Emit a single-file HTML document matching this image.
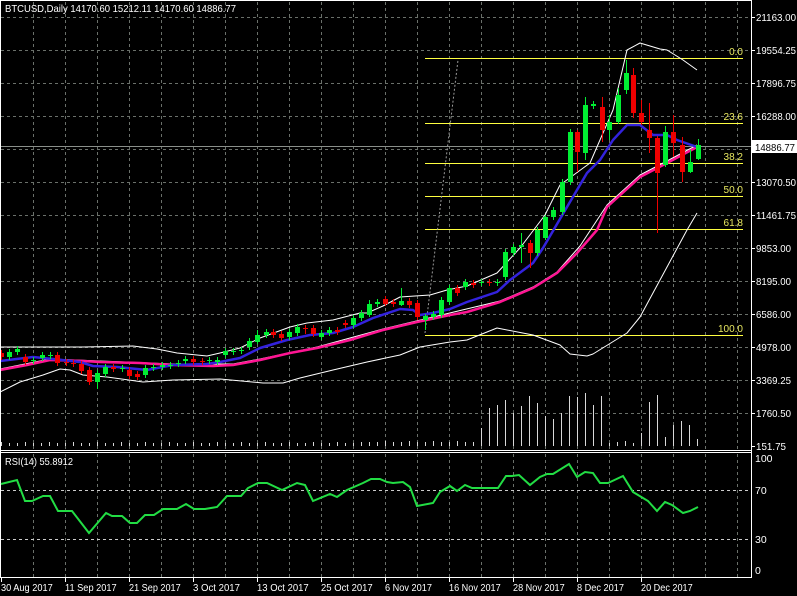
<!DOCTYPE html>
<html><head><meta charset="utf-8"><style>
html,body{margin:0;padding:0;background:#000;width:797px;height:596px;overflow:hidden}
svg{display:block}
text{font-family:"Liberation Sans",sans-serif;font-size:10.5px;fill:#fff}
</style></head><body>
<svg id="s" width="797" height="596" xmlns="http://www.w3.org/2000/svg">
<rect width="797" height="596" fill="#000"/>
<g id="grid" stroke="#6a706a" stroke-width="1" stroke-dasharray="3,3"></g>
<line x1="0" y1="146.5" x2="751" y2="146.5" stroke="#8a8f8a"/>
<g id="fib"></g>
<line x1="425" y1="333" x2="458" y2="60" stroke="#9a9a9a" stroke-dasharray="2,2"/>
<g id="vol" stroke="#d8d8d8"></g>
<g id="lines" fill="none"></g>
<g id="candles"></g>
<line x1="0" y1="450.5" x2="751" y2="450.5" stroke="#fff"/>
<line x1="0" y1="452.5" x2="751" y2="452.5" stroke="#fff"/>
<line x1="751.5" y1="0" x2="751.5" y2="578" stroke="#fff"/>
<line x1="0" y1="577.5" x2="751" y2="577.5" stroke="#fff"/>
<line x1="0" y1="0.5" x2="751" y2="0.5" stroke="#fff"/>
<line x1="0.5" y1="0" x2="0.5" y2="578" stroke="#fff"/>
<g id="rsi" fill="none"></g>
<g id="labels"></g>
<text x="5" y="12" textLength="231" lengthAdjust="spacingAndGlyphs">BTCUSD,Daily  14170.60 15212.11 14170.60 14886.77</text>
<text x="5" y="465" textLength="68" lengthAdjust="spacingAndGlyphs">RSI(14) 55.8912</text>
</svg>
<script>
var NS="http://www.w3.org/2000/svg";
function el(p,t,a,txt){var e=document.createElementNS(NS,t);for(var k in a)e.setAttribute(k,a[k]);if(txt!=null)e.textContent=txt;document.getElementById(p).appendChild(e);return e;}
for(var x=33;x<751;x+=32){el('grid','line',{x1:x+.5,y1:2,x2:x+.5,y2:449});el('grid','line',{x1:x+.5,y1:454,x2:x+.5,y2:577});}
var py=[17,50,83,116,149,182,215,248,281,314,347,380,413];
py.forEach(function(y){el('grid','line',{x1:1,y1:y+.5,x2:751,y2:y+.5});});
[490,539].forEach(function(y){el('grid','line',{x1:1,y1:y+.5,x2:751,y2:y+.5,stroke:"#ccc"});});
var pl=["21163.00","19554.25","17896.75","16288.00","14886.77","13070.50","11461.75","9853.00","8195.00","6586.00","4978.00","3369.25","1760.50","151.75"];
var ply=[17,50,83,116,147,182,215,248,281,314,347,380,413,446];
pl.forEach(function(t,i){if(i==4)return;el('labels','line',{x1:751,y1:ply[i]+.5,x2:755,y2:ply[i]+.5,stroke:"#fff"});el('labels','text',{x:756,y:ply[i]+4,textLength:(t.length*5),lengthAdjust:"spacingAndGlyphs"},t);});
el('labels','rect',{x:752,y:140,width:45,height:13,fill:"#fff"});
el('labels','text',{x:755,y:151,style:"fill:#000",textLength:40,lengthAdjust:"spacingAndGlyphs"},"14886.77");
[["100",462],["70",494],["30",543],["0",574]].forEach(function(a){el('labels','text',{x:755,y:a[1]},a[0]);});
var dl=["30 Aug 2017","11 Sep 2017","21 Sep 2017","3 Oct 2017","13 Oct 2017","25 Oct 2017","6 Nov 2017","16 Nov 2017","28 Nov 2017","8 Dec 2017","20 Dec 2017"];
dl.forEach(function(t,i){var x=1+64*i;el('labels','line',{x1:x+.5,y1:577,x2:x+.5,y2:582,stroke:"#fff"});el('labels','text',{x:x,y:591,textLength:(t.length*4.7),lengthAdjust:"spacingAndGlyphs"},t);});
[["0.0",58],["23.6",123],["38.2",163],["50.0",196],["61.8",229],["100.0",335]].forEach(function(f){
el('fib','line',{x1:425,y1:f[1]+.5,x2:743,y2:f[1]+.5,stroke:"#ffff40"});
el('fib','text',{x:743,y:f[1]-3,"text-anchor":"end",style:"fill:#e8e860;font-size:10px"},f[0]);});
var vol=[[481,428],[489,408],[497,405],[505,400],[513,413],[521,406],[529,396],[537,403],[545,416],[553,419],[561,413],[569,396],[577,397],[585,393],[593,405],[601,396],[609,443],[617,442],[625,441],[633,443],[641,433],[649,402],[657,395],[665,437],[673,425],[681,421],[689,425],[697,439]];
for(var k=0;k<60;k++){var x=1+8*k;el('vol','line',{x1:x+.5,y1:446,x2:x+.5,y2:443-(k%3==0?1:0)-(k>45?1:0)});}
vol.forEach(function(v){el('vol','line',{x1:v[0]+.5,y1:446,x2:v[0]+.5,y2:v[1]});});
function pl2(pts,c,w){el('lines','polyline',{points:pts,stroke:c,"stroke-width":w,"stroke-linejoin":"round"});}
pl2("0,392 20,382 43,375 60,369 70,370 83,375 107,377 143,382 173,380 220,379 263,383 283,383 300,378 333,370 367,362 400,355 420,347 450,342 467,340 497,328 533,335 560,345 570,354 587,356 593,354 627,333 640,317 660,280 687,230 697,213","#fff",1);
pl2("0,347 83,347 133,346 157,349 177,353 207,356 220,353 240,348 260,338 290,327 307,323 333,320 360,313 367,313 383,306 400,297 430,295 447,290 467,286 497,273 520,248 545,215 560,185 590,163 613,110 627,50 640,43 660,49 667,50 683,60 697,70","#fff",1);
pl2("0,369 50,359 100,361 173,364 233,364 260,359 317,347 383,329 433,317 500,301 533,287 557,272 580,246 607,205 640,175 667,161 697,145","#fff",1);
pl2("0,370 27,365 50,360 83,361 100,362 140,363 173,365 213,366 233,365 260,360 290,353 317,348 350,340 383,330 417,322 450,315 467,312 500,302 533,288 557,273 577,253 597,230 607,207 640,177 667,163 697,147","#ff1493",2.5);
pl2("0,361 33,357 53,359 80,362 93,366 117,367 147,370 173,365 207,364 220,362 240,358 260,348 287,340 310,335 333,333 353,327 373,318 400,309 413,310 420,315 433,313 450,309 467,302 497,292 510,280 533,263 543,248 567,207 587,173 600,160 613,140 627,125 640,125 653,135 667,135 677,140 697,147","#3322dd",2.5);
var G="#00ee33",R="#ee0000";
var cs=[[1,353,357,'r'],[9,352,357,'g'],[17,349,352,'g'],[25,357,362,'r'],[33,360,361,'g'],[42,355,358,'g'],[50,355,356,'g'],[57,355,363,'r'],[66,362,363,'r'],[73,363,364,'r'],[81,364,371,'r'],[89,370,382,'r'],[97,373,382,'g',370,389],[105,367,374,'g'],[113,367,369,'r'],[122,368,369,'g'],[129,370,376,'r'],[137,374,377,'r'],[145,368,375,'g'],[153,367,368,'g'],[162,365,367,'g'],[170,365,366,'g'],[178,363,364,'g'],[185,359,361,'g'],[193,359,362,'r'],[202,361,362,'r'],[209,360,361,'g'],[217,360,362,'g'],[225,351,355,'g'],[233,351,352,'g'],[241,350,351,'g'],[249,341,347,'g'],[257,335,342,'g',330,344],[266,332,335,'g'],[273,332,335,'r'],[281,334,338,'r'],[289,332,337,'g'],[297,327,333,'g'],[305,328,329,'r',325,334],[313,328,334,'r'],[321,333,337,'g'],[329,330,333,'g'],[337,330,332,'r'],[345,323,325,'r'],[353,318,325,'g'],[361,313,318,'g'],[369,304,315,'g',300,317],[377,302,304,'g'],[385,299,304,'r',296,306],[393,302,304,'r'],[401,301,305,'g',288,306],[409,301,305,'r'],[417,303,317,'r'],[425,316,320,'g',314,330],[433,314,317,'g'],[441,300,315,'g'],[449,288,302,'g'],[457,288,293,'r'],[465,282,287,'g'],[473,283,285,'r'],[481,282,283,'g'],[489,282,283,'r'],[497,282,283,'g'],[505,252,277,'g'],[513,247,253,'g'],[521,245,247,'g',233,263],[530,243,253,'r',240,268],[537,230,253,'g'],[545,217,238,'g',215,240],[553,210,217,'g'],[562,182,212,'g'],[570,132,182,'g'],[577,132,152,'r',130,172],[585,105,153,'g',97,160],[593,104,106,'g'],[602,107,130,'r',97,142],[609,122,130,'g',115,140],[618,95,122,'g',88,124],[626,73,90,'g',60,94],[633,75,113,'r',68,118],[641,113,122,'r',100,125],[649,130,138,'r',103,153],[657,138,173,'r',136,233],[665,132,165,'g',126,167],[673,132,143,'r',115,157],[682,145,172,'r',137,182],[690,162,172,'g',150,173],[698,145,159,'g',139,160]];
cs.forEach(function(c){var col=c[3]=='g'?G:R;var hi=c[4]!=null?c[4]:c[1]-3,lo=c[5]!=null?c[5]:c[2]+3;
el('candles','line',{x1:c[0]+.5,y1:hi,x2:c[0]+.5,y2:lo,stroke:col});
el('candles','rect',{x:c[0]-2,y:c[1],width:5,height:Math.max(1,c[2]-c[1]),fill:col});});
el('rsi','polyline',{points:"1,484 17,480 25,501 32,501 43,496 50,496 58,511 72,511 89,533 106,513 112,516 122,516 130,523 137,523 145,515 154,515 163,509 177,509 186,504 194,509 205,509 217,507 227,496 241,496 248,488 258,483 267,483 282,490 297,483 305,485 313,501 330,494 337,497 347,490 363,483 371,479 380,479 387,482 393,483 403,482 410,487 417,506 433,503 440,492 450,486 457,491 465,485 472,488 498,488 506,476 512,476 519,475 530,485 540,477 547,474 553,474 569,464 577,477 585,472 593,473 600,483 608,483 623,476 633,492 648,501 657,511 665,502 672,505 683,513 690,511 698,507",stroke:"#22dd44","stroke-width":2});
</script>
</body></html>
